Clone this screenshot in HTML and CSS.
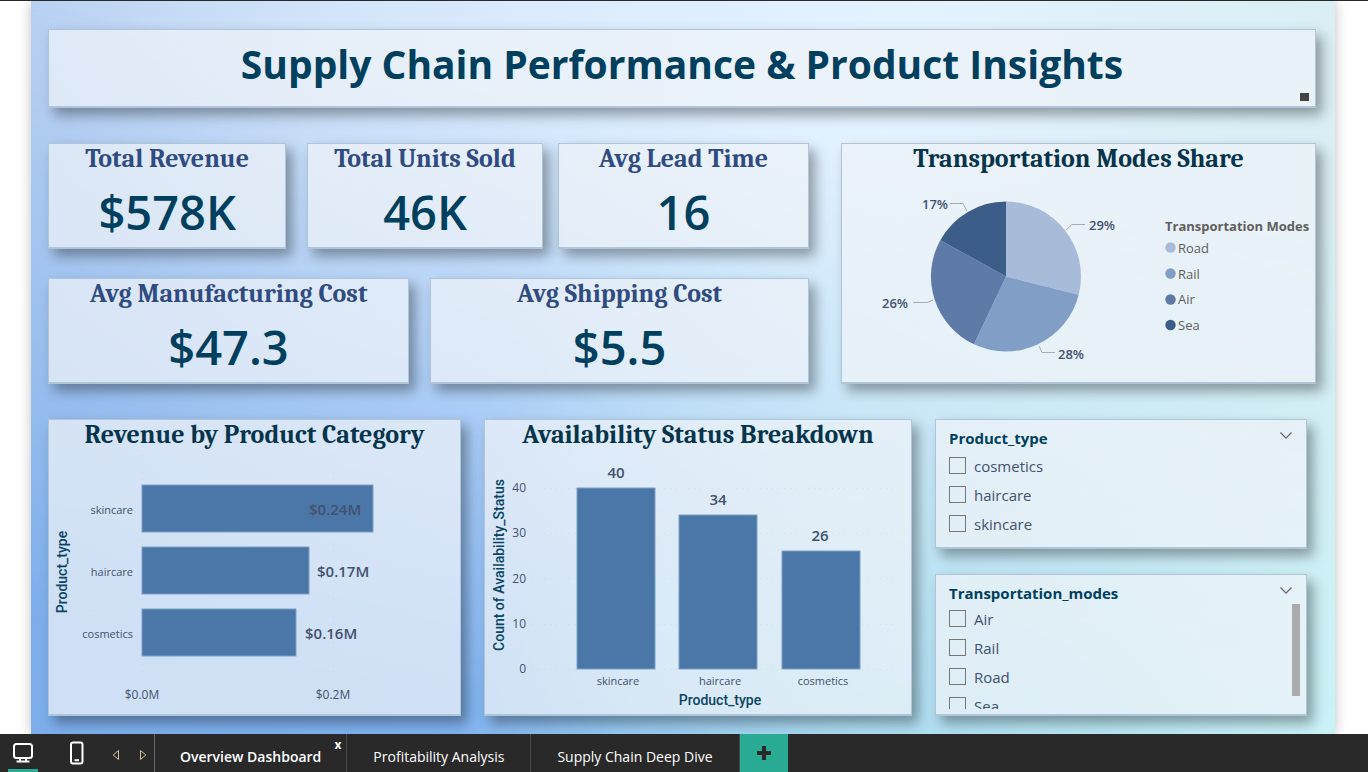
FILE: index.html
```html
<!DOCTYPE html>
<html lang="en">
<head>
<meta charset="utf-8">
<title>Supply Chain Performance &amp; Product Insights</title>
<link rel="stylesheet" href="styles.css">
</head>
<body>
<div class="stage">
  <main class="canvas">
    <header class="card banner">
      <h1>Supply Chain Performance &amp; Product Insights</h1>
      <span class="handle"></span>
    </header>

    <div class="middle">
      <div class="kpis">
        <div class="kpi-row">
          <section class="card kpi revenue"><h2>Total Revenue</h2><p>$578K</p></section>
          <div class="kpi-pair">
            <section class="card kpi units"><h2>Total Units Sold</h2><p>46K</p></section>
            <section class="card kpi lead"><h2>Avg Lead Time</h2><p>16</p></section>
          </div>
        </div>
        <div class="kpi-row">
          <section class="card kpi manufacturing"><h2>Avg Manufacturing Cost</h2><p>$47.3</p></section>
          <section class="card kpi shipping"><h2>Avg Shipping Cost</h2><p>$5.5</p></section>
        </div>
      </div>

      <section class="card chart">
        <h2>Transportation Modes Share</h2>
        <svg viewBox="0 0 471 207" role="img" aria-label="Transportation modes share">
          <path fill="#a8bcda" d="M163 102.5V27.5A75 75 0 0 1 235.7 120.8Z"/>
          <path fill="#819fc6" d="M163 102.5L235.7 120.8A75 75 0 0 1 131 170.3Z"/>
          <path fill="#5e7ba8" d="M163 102.5L131 170.3A75 75 0 0 1 97.3 66.2Z"/>
          <path fill="#3c5d87" d="M163 102.5L97.3 66.2A75 75 0 0 1 163 27.5Z"/>
          <g class="leader">
            <path d="M107 29.5H120L124 37"/>
            <path d="M223 56L229 50.5H242"/>
            <path d="M70 128.5H84L90 126"/>
            <path d="M196 172L199 178.5H212"/>
          </g>
          <g class="share">
            <text x="79" y="35">17%</text>
            <text x="246" y="56">29%</text>
            <text x="39" y="134">26%</text>
            <text x="215" y="185">28%</text>
          </g>
          <g class="legend">
            <text class="legend-title" x="322" y="57">Transportation Modes</text>
            <circle cx="327.500" cy="73.500" r="5.200" fill="#a8bcda"/><text x="335" y="79">Road</text>
            <circle cx="327.500" cy="99.500" r="5.200" fill="#819fc6"/><text x="335" y="105">Rail</text>
            <circle cx="327.500" cy="125.500" r="5.200" fill="#5e7ba8"/><text x="335" y="130">Air</text>
            <circle cx="327.500" cy="151" r="5.200" fill="#3c5d87"/><text x="335" y="156">Sea</text>
          </g>
        </svg>
      </section>
    </div>

    <div class="bottom">
      <section class="card chart">
        <h2>Revenue by Product Category</h2>
        <svg viewBox="0 0 409 263" role="img" aria-label="Revenue by product category">
          <path class="grid" d="M92.500 5V230M283.500 5V230"/>
          <g class="bar">
            <rect x="92" y="35" width="231" height="47"/>
            <rect x="92" y="97" width="167" height="47"/>
            <rect x="92" y="159" width="154" height="47"/>
          </g>
          <g class="category end">
            <text x="83" y="64">skincare</text>
            <text x="83" y="126">haircare</text>
            <text x="83" y="188">cosmetics</text>
          </g>
          <g class="value">
            <text x="259" y="65">$0.24M</text>
            <text x="267" y="127">$0.17M</text>
            <text x="255" y="189">$0.16M</text>
          </g>
          <g class="tick mid">
            <text x="92" y="249">$0.0M</text>
            <text x="283" y="249">$0.2M</text>
          </g>
          <text class="axis" transform="translate(17 122) rotate(-90)">Product_type</text>
        </svg>
      </section>

      <section class="card chart">
        <h2>Availability Status Breakdown</h2>
        <svg viewBox="0 0 424 263" role="img" aria-label="Availability status breakdown">
          <path class="grid" d="M46 38.500H407M46 83.500H407M46 128.500H407M46 174.500H407M46 219.500H407"/>
          <g class="bar">
            <rect x="91" y="38" width="78" height="181"/>
            <rect x="193" y="65" width="78" height="154"/>
            <rect x="296" y="101" width="78" height="118"/>
          </g>
          <g class="tick end">
            <text x="40" y="42">40</text>
            <text x="40" y="87">30</text>
            <text x="40" y="133">20</text>
            <text x="40" y="178">10</text>
            <text x="40" y="223">0</text>
          </g>
          <g class="value mid">
            <text x="130" y="28">40</text>
            <text x="232" y="55">34</text>
            <text x="334" y="91">26</text>
          </g>
          <g class="category mid">
            <text x="132" y="235">skincare</text>
            <text x="234" y="235">haircare</text>
            <text x="337" y="235">cosmetics</text>
          </g>
          <text class="axis" x="234" y="255">Product_type</text>
          <text class="axis" transform="translate(18 115) rotate(-90)">Count of Availability_Status</text>
        </svg>
      </section>

      <div class="slicers">
        <section class="card slicer" role="group" aria-labelledby="product-type">
          <div class="slicer-head">
            <h3 id="product-type">Product_type</h3>
            <button type="button" aria-label="Product_type options"><svg width="14" height="9" viewBox="0 0 14 9"><path d="M1.500 1.500L7 7.200L12.500 1.500"/></svg></button>
          </div>
          <div class="slicer-body">
            <div class="options">
              <label><input type="checkbox">cosmetics</label>
              <label><input type="checkbox">haircare</label>
              <label><input type="checkbox">skincare</label>
            </div>
          </div>
        </section>
        <section class="card slicer modes" role="group" aria-labelledby="transportation-modes">
          <div class="slicer-head">
            <h3 id="transportation-modes">Transportation_modes</h3>
            <button type="button" aria-label="Transportation_modes options"><svg width="14" height="9" viewBox="0 0 14 9"><path d="M1.500 1.500L7 7.200L12.500 1.500"/></svg></button>
          </div>
          <div class="slicer-body">
            <div class="options">
              <label><input type="checkbox">Air</label>
              <label><input type="checkbox">Rail</label>
              <label><input type="checkbox">Road</label>
              <label><input type="checkbox">Sea</label>
            </div>
            <span class="thumb"></span>
          </div>
        </section>
      </div>
    </div>
  </main>
</div>

<nav class="pages">
  <button type="button" class="view active" aria-label="Desktop layout">
    <svg width="22" height="22" viewBox="0 0 22 22"><rect x="2" y="2" width="18" height="14" rx="2.500"/><path d="M8 16v3M14 16v3M4.500 19.500H17.500"/></svg>
  </button>
  <button type="button" class="view phone" aria-label="Mobile layout">
    <svg width="16" height="24" viewBox="0 0 16 24"><rect x="2" y="1.500" width="11.500" height="21" rx="2"/><path d="M5.500 19.200H10"/></svg>
  </button>
  <button type="button" class="step" aria-label="Previous page"><svg width="8" height="12" viewBox="0 0 8 12"><path d="M6.500 1.500V10.500L1.200 6Z"/></svg></button>
  <button type="button" class="step" aria-label="Next page"><svg width="8" height="12" viewBox="0 0 8 12"><path d="M1.500 1.500V10.500L6.800 6Z"/></svg></button>
  <div class="tab current"><a href="#overview">Overview Dashboard</a><button type="button" class="close" aria-label="Close page">x</button></div>
  <div class="tab"><a href="#profitability">Profitability Analysis</a></div>
  <div class="tab"><a href="#deep-dive">Supply Chain Deep Dive</a></div>
  <button type="button" class="add" aria-label="New page"><svg width="14" height="14" viewBox="0 0 14 14"><path d="M7 0V14M0 7H14"/></svg></button>
</nav>
</body>
</html>
```
FILE: styles.css
```css
* { box-sizing: border-box; }

body {
  margin: 0;
  min-height: 100vh;
  display: flex;
  flex-direction: column;
  background: #fff;
  border-top: 1px solid #292929;
  font-family: "Open Sans", "Noto Sans", sans-serif;
  color: #42526e;
}

h1, h2, h3, p { margin: 0; }
button { border: 0; padding: 0; background: none; color: inherit; font: inherit; }

.stage { flex: 1; display: flex; overflow: hidden; }

.canvas {
  flex: 1;
  position: relative;
  isolation: isolate;
  margin: 0 33px 0 31px;
  padding: 28px 19px 18px 17px;
  display: flex;
  flex-direction: column;
  gap: 35px;
  background: linear-gradient(97deg, #b9d1f2 0%, #d3e5fa 22%, #dcedfe 42%, #e3f2ff 62%, #daeff6 90%, #d8eff3 100%);
  box-shadow: 0 0 12px rgba(0, 0, 0, .25);
}
.canvas::before {
  content: "";
  position: absolute;
  inset: 0;
  z-index: -1;
  background: linear-gradient(97deg, #7cadea 0%, #80b1ef 36%, #98caf0 50%, #a6d8ee 64%, #b4e5f2 84%, #c6f2f8 100%);
  -webkit-mask-image: linear-gradient(190deg, transparent 24%, rgba(0, 0, 0, .45) 54%, #000 88%);
  mask-image: linear-gradient(190deg, transparent 24%, rgba(0, 0, 0, .45) 54%, #000 88%);
}

.card {
  min-width: 0;
  padding: 1px;
  background: rgba(239, 243, 248, .72);
  background-clip: padding-box;
  border: 1px solid #b0c5d8;
  border-bottom-width: 2px;
  box-shadow: 6px 7px 12px rgba(0, 0, 0, .36);
}

.banner { position: relative; height: 79px; text-align: center; }
.banner h1 { font-size: 39px; line-height: 66px; font-weight: 700; color: #003f5e; }
.handle { position: absolute; right: 6px; bottom: 5px; width: 9px; height: 8px; background: #444; }

.middle { display: grid; grid-template-columns: 761fr 475fr; gap: 32px; }
.kpis { display: flex; flex-direction: column; gap: 29px; }
.kpi-row { display: flex; gap: 21px; }
.kpi-pair { flex: 501; display: flex; gap: 15px; }
.kpi { flex: 1 1 0; height: 106px; text-align: center; }
.revenue { flex-grow: 234; }
.units { flex-grow: 235; }
.lead { flex-grow: 251; }
.manufacturing { flex-grow: 361; }
.shipping { flex-grow: 379; }

.card h2 {
  font-family: Cambria, Caladea, "Liberation Serif", serif;
  font-size: 26px;
  line-height: 29px;
  font-weight: 700;
  text-align: center;
  color: #06344b;
  white-space: nowrap;
}
.kpi h2 { color: #2f4b80; }
.kpi p { font-size: 47px; line-height: 76px; font-weight: 600; color: #003f5e; }

.chart svg { display: block; width: 100%; height: auto; }
.chart text { fill: #42526e; }
.leader { fill: none; stroke: #a9adb3; stroke-width: 1; }
.share { font-size: 13px; font-weight: 600; }
.legend { font-size: 13px; }
.chart .legend text { fill: #605e5c; }
.legend-title { font-weight: 700; }
.grid { fill: none; stroke: rgba(120, 150, 180, .14); stroke-dasharray: 1 5; }
.bar { fill: #4b77a8; stroke: #7e9fc6; stroke-width: 1; }
.tick { font-size: 12px; }
.category { font-size: 11px; }
.value { font-size: 15px; font-weight: 600; }
.end { text-anchor: end; }
.mid { text-anchor: middle; }
.chart .axis { font-family: Roboto, sans-serif; font-size: 14px; font-weight: 500; text-anchor: middle; fill: #0b4564; }

.bottom { display: grid; grid-template-columns: 413fr 428fr 372fr; gap: 23px; margin-right: 9px; }
.slicers { display: flex; flex-direction: column; gap: 25px; }
.slicer { padding: 8px 6px 5px 13px; height: 130px; display: flex; flex-direction: column; }
.modes { height: 142px; }
.slicer-head { display: flex; justify-content: space-between; padding-right: 7px; margin-bottom: 3px; }
.modes .slicer-head { margin-bottom: 1px; }
.slicer h3 { font-size: 15px; line-height: 20px; font-weight: 700; color: #003f5e; }
.slicer-head button { height: 14px; display: flex; align-items: center; }
.slicer-head path { fill: none; stroke: #666; stroke-width: 1.2; }
.slicer-body { flex: 1; min-height: 0; display: flex; justify-content: space-between; }
.options { flex: 1; overflow: hidden; }
.options label { display: flex; align-items: center; gap: 8px; height: 29px; font-size: 15px; }
.options input { appearance: none; margin: 0; width: 17px; height: 17px; border: 1px solid #777; }
.thumb { width: 8px; height: 92px; background: #ababab; }

.pages { height: 38px; display: flex; background: #292929; color: #fff; }
.pages svg { fill: none; stroke: #fff; stroke-width: 2; }
.view { width: 46px; display: flex; align-items: center; justify-content: center; }
.active { background: linear-gradient(#2aac94, #2aac94) 8px 100% / 30px 3px no-repeat; }
.phone { width: 62px; }
.step { width: 15px; margin-right: 12px; display: flex; align-items: center; justify-content: center; padding-top: 4px; }
.pages .step svg { stroke: #d6c39a; stroke-width: 1; }
.step + .tab { border-left: 1px solid #666; margin-left: -8px; }
.tab { position: relative; padding: 0 26px; border-right: 1px solid #484848; font-size: 14px; line-height: 45px; white-space: nowrap; }
.tab a { color: #fff; text-decoration: none; }
.current { font-weight: 600; padding: 0 25px; }
.close { position: absolute; top: 3px; right: 5px; font-size: 12px; line-height: 16px; font-weight: 700; }
.add { width: 48px; display: flex; align-items: center; justify-content: center; background: #2aac94; }
.pages .add svg { stroke: #292929; stroke-width: 4; }
```
